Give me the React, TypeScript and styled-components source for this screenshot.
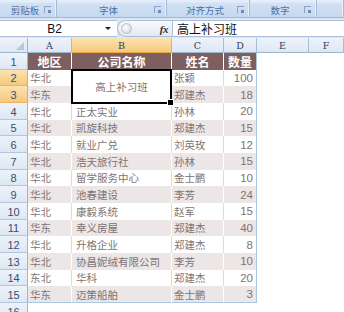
import React from "react";
import styled, { createGlobalStyle, css } from "styled-components";

const Global = createGlobalStyle`
  html, body { margin: 0; padding: 0; background: #fff; }
  body { width: 344px; height: 312px; overflow: hidden; font-family: "Noto Sans CJK SC", "Liberation Sans", sans-serif; }
`;

const Page = styled.div`
  width: 344px;
  height: 312px;
  overflow: hidden;
  display: flex;
  flex-direction: column;
  background: #fff;
`;

/* ---------- Ribbon ---------- */
const Ribbon = styled.div`
  height: 17px;
  display: flex;
  background: linear-gradient(#e4edf9 0px, #e4edf9 2px, #d3e2f4 3px, #c5d8ef 100%);
  border-bottom: 1px solid #9fb8d6;
`;

const Group = styled.div<{ $w?: number }>`
  ${(p) => (p.$w ? css`width: ${p.$w}px;` : css`flex: 1;`)}
  flex-shrink: 0;
  display: flex;
  align-items: center;
  padding-left: 6px;
  box-sizing: border-box;
  border-right: 1px solid #a3bcdc;
  box-shadow: inset -1px 0 0 #e6eef9;
`;

const GroupLabel = styled.span`
  flex: 1;
  text-align: center;
  font-size: 9.5px;
  line-height: 12px;
  color: #4a71a8;
  padding-top: 3px;
`;

const Launcher = styled.span`
  width: 6px;
  height: 6px;
  margin-right: 5px;
  margin-top: 2px;
  border-top: 1px solid #8aa2c4;
  border-left: 1px solid #8aa2c4;
  position: relative;
  &::after {
    content: "";
    position: absolute;
    right: 0;
    bottom: 0;
    width: 3px;
    height: 3px;
    background: #6f8bb2;
  }
`;

/* ---------- Formula bar ---------- */
const FormulaArea = styled.div`
  background: #dce7f4;
  padding: 2px 0 1px;
  display: flex;
  height: 17px;
`;

const NameBox = styled.div`
  width: 117px;
  flex-shrink: 0;
  display: flex;
  align-items: center;
  background: #fff;
  border-top: 1px solid #a9bfdb;
  border-bottom: 1px solid #a9bfdb;
  box-sizing: border-box;
`;

const NameText = styled.span`
  flex: 1;
  text-align: center;
  font-family: "Liberation Sans", sans-serif;
  font-size: 12px;
  color: #111;
  padding-left: 4px;
`;

const DropArrow = styled.span`
  width: 0;
  height: 0;
  margin-right: 6px;
  border-left: 3px solid transparent;
  border-right: 3px solid transparent;
  border-top: 3px solid #222;
`;

const FxZone = styled.div`
  width: 55px;
  flex-shrink: 0;
  display: flex;
  align-items: center;
  justify-content: space-between;
  box-sizing: border-box;
  background: linear-gradient(#f7f9fc, #e4e9f0);
  border: 1px solid #a9bfdb;
  border-right: none;
  border-radius: 9px 0 0 9px;
  padding: 0 4px 0 3px;
`;

const Knob = styled.span`
  width: 9px;
  height: 9px;
  border-radius: 50%;
  background: radial-gradient(circle at 40% 40%, #ffffff, #c8ced8);
  border: 1px solid #b9c2cf;
`;

const Fx = styled.span`
  font-family: "Liberation Serif", serif;
  font-style: italic;
  font-weight: bold;
  font-size: 11px;
  color: #333;
  letter-spacing: -0.5px;
`;

const FormulaInput = styled.div`
  flex: 1;
  background: #fff;
  border: 1px solid #a9bfdb;
  border-right: none;
  display: flex;
  align-items: center;
  padding-left: 4px;
  font-size: 12px;
  color: #111;
`;

/* ---------- Sheet ---------- */
const ROW_H = 16.667;

const Sheet = styled.div`
  flex: 1;
  display: grid;
  grid-template-columns: 28px 44px 100px 52px 33px 52px 1fr;
  grid-template-rows: 15px repeat(16, ${ROW_H}px);
  overflow: hidden;
`;

const headerBg = css`
  background: linear-gradient(#eef3fa, #dde7f4);
`;
const selBg = css`
  background: linear-gradient(#fbe2b3, #f6c97a);
`;

const Corner = styled.div`
  ${headerBg};
  border-right: 1px solid #9eb6ce;
  border-bottom: 1px solid #9eb6ce;
  box-sizing: border-box;
  display: flex;
  align-items: flex-end;
  justify-content: flex-end;
  padding: 0 3px 2px 0;
`;

const CornerTri = styled.span`
  width: 0;
  height: 0;
  border-left: 8px solid transparent;
  border-bottom: 8px solid #b7c7db;
`;

const ColHead = styled.div<{ $sel?: boolean }>`
  ${(p) => (p.$sel ? selBg : headerBg)};
  border-right: 1px solid ${(p) => (p.$sel ? "#e8b35d" : "#a8bdd5")};
  border-bottom: 1px solid ${(p) => (p.$sel ? "#e8a848" : "#9eb6ce")};
  box-sizing: border-box;
  display: flex;
  align-items: center;
  justify-content: center;
  font-family: "DejaVu Serif", serif;
  font-size: 9.5px;
  color: #2b3f5c;
`;

const RowHead = styled.div<{ $sel?: boolean }>`
  ${(p) => (p.$sel ? selBg : headerBg)};
  border-right: 1px solid #9eb6ce;
  border-bottom: 1px solid ${(p) => (p.$sel ? "#eab466" : "#b3c6dc")};
  box-sizing: border-box;
  display: flex;
  align-items: flex-end;
  justify-content: center;
  font-family: "Liberation Sans", sans-serif;
  font-size: 11px;
  line-height: 14px;
  color: #3a4e70;
`;

const HeadCell = styled.div<{ $last?: boolean }>`
  background: #7d5f5f;
  color: #fff;
  font-weight: bold;
  font-size: 12px;
  display: flex;
  align-items: center;
  justify-content: center;
  box-sizing: border-box;
  border-right: 1px solid ${(p) => (p.$last ? "#a9c8e4" : "#ffffff")};
`;

const DataCell = styled.div<{ $band: boolean; $align?: "left" | "right"; $pad?: number; $last?: boolean; $bottom?: boolean }>`
  background: ${(p) => (p.$band ? "#ece6e6" : "#ffffff")};
  color: #807374;
  font-size: 10.5px;
  display: flex;
  align-items: center;
  justify-content: ${(p) => (p.$align === "right" ? "flex-end" : "flex-start")};
  padding: ${(p) => (p.$align === "right" ? `0 ${p.$pad ?? 3}px 0 0` : `0 0 0 ${p.$pad ?? 2}px`)};
  box-sizing: border-box;
  white-space: nowrap;
  border-right: 1px solid ${(p) => (p.$last ? "#a9c8e4" : p.$band ? "#ffffff" : "#e0d9d9")};
  border-bottom: ${(p) => (p.$bottom ? "1px solid #a9c8e4" : "none")};
`;

const NumText = styled.span`
  font-family: "Liberation Sans", sans-serif;
  font-size: 11.5px;
`;

const Merged = styled.div`
  grid-row: 3 / span 2;
  grid-column: 3;
  background: #fff;
  color: #807374;
  font-size: 10.5px;
  display: flex;
  align-items: center;
  justify-content: center;
  position: relative;
  border-right: 1px solid #e0d9d9;
  &::after {
    content: "";
    position: absolute;
    inset: -1px;
    border: 2px solid #000;
  }
`;

const FillHandle = styled.span`
  position: absolute;
  right: -3px;
  bottom: -3px;
  width: 5px;
  height: 5px;
  background: #000;
  border: 1px solid #fff;
  z-index: 2;
`;

const Blank = styled.div`
  background: #fff;
`;

type Row = [string, string, string, string];

const rows: Row[] = [
  ["华北", "", "张颖", "100"],
  ["华东", "", "郑建杰", "18"],
  ["华北", "正太实业", "孙林", "20"],
  ["华北", "凯旋科技", "郑建杰", "15"],
  ["华北", "就业广兑", "刘英玫", "12"],
  ["华北", "浩天旅行社", "孙林", "15"],
  ["华北", "留学服务中心", "金士鹏", "10"],
  ["华北", "池春建设", "李芳", "24"],
  ["华北", "康毅系统", "赵军", "15"],
  ["华东", "幸义房屋", "郑建杰", "40"],
  ["华北", "升格企业", "郑建杰", "8"],
  ["华北", "协昌妮绒有限公司", "李芳", "10"],
  ["东北", "华科", "郑建杰", "20"],
  ["华东", "迈策船舶", "金士鹏", "3"],
];

const cols = ["A", "B", "C", "D", "E", "F"];
const groups: { label: string; w?: number }[] = [
  { label: "剪贴板", w: 57 },
  { label: "字体", w: 110 },
  { label: "对齐方式", w: 83 },
  { label: "数字", w: 67 },
];

export default function App() {
  return (
    <Page>
      <Global />
      <Ribbon>
        {groups.map((g) => (
          <Group key={g.label} $w={g.w}>
            <GroupLabel>{g.label}</GroupLabel>
            <Launcher />
          </Group>
        ))}
        <Group />
      </Ribbon>
      <FormulaArea>
        <NameBox>
          <NameText>B2</NameText>
          <DropArrow />
        </NameBox>
        <FxZone>
          <Knob />
          <Fx>fx</Fx>
        </FxZone>
        <FormulaInput>高上补习班</FormulaInput>
      </FormulaArea>
      <Sheet>
        <Corner>
          <CornerTri />
        </Corner>
        {cols.map((c) => (
          <ColHead key={c} $sel={c === "B"}>
            {c}
          </ColHead>
        ))}

        <RowHead>1</RowHead>
        <HeadCell>地区</HeadCell>
        <HeadCell>公司名称</HeadCell>
        <HeadCell>姓名</HeadCell>
        <HeadCell $last>数量</HeadCell>
        <Blank />
        <Blank />

        {rows.map((r, i) => {
          const n = i + 2;
          const band = n % 2 === 1;
          const bottom = n === 15;
          return (
            <React.Fragment key={n}>
              <RowHead $sel={n === 2 || n === 3}>{n}</RowHead>
              <DataCell $band={band} $bottom={bottom}>{r[0]}</DataCell>
              {n === 2 ? (
                <Merged>
                  高上补习班
                  <FillHandle />
                </Merged>
              ) : n === 3 ? null : (
                <DataCell $band={band} $pad={4} $bottom={bottom}>
                  {r[1]}
                </DataCell>
              )}
              <DataCell $band={band} $bottom={bottom}>{r[2]}</DataCell>
              <DataCell $band={band} $align="right" $last $bottom={bottom}>
                <NumText>{r[3]}</NumText>
              </DataCell>
              <Blank />
              <Blank />
            </React.Fragment>
          );
        })}

        <RowHead>16</RowHead>
        <Blank />
        <Blank />
        <Blank />
        <Blank />
        <Blank />
        <Blank />
      </Sheet>
    </Page>
  );
}
